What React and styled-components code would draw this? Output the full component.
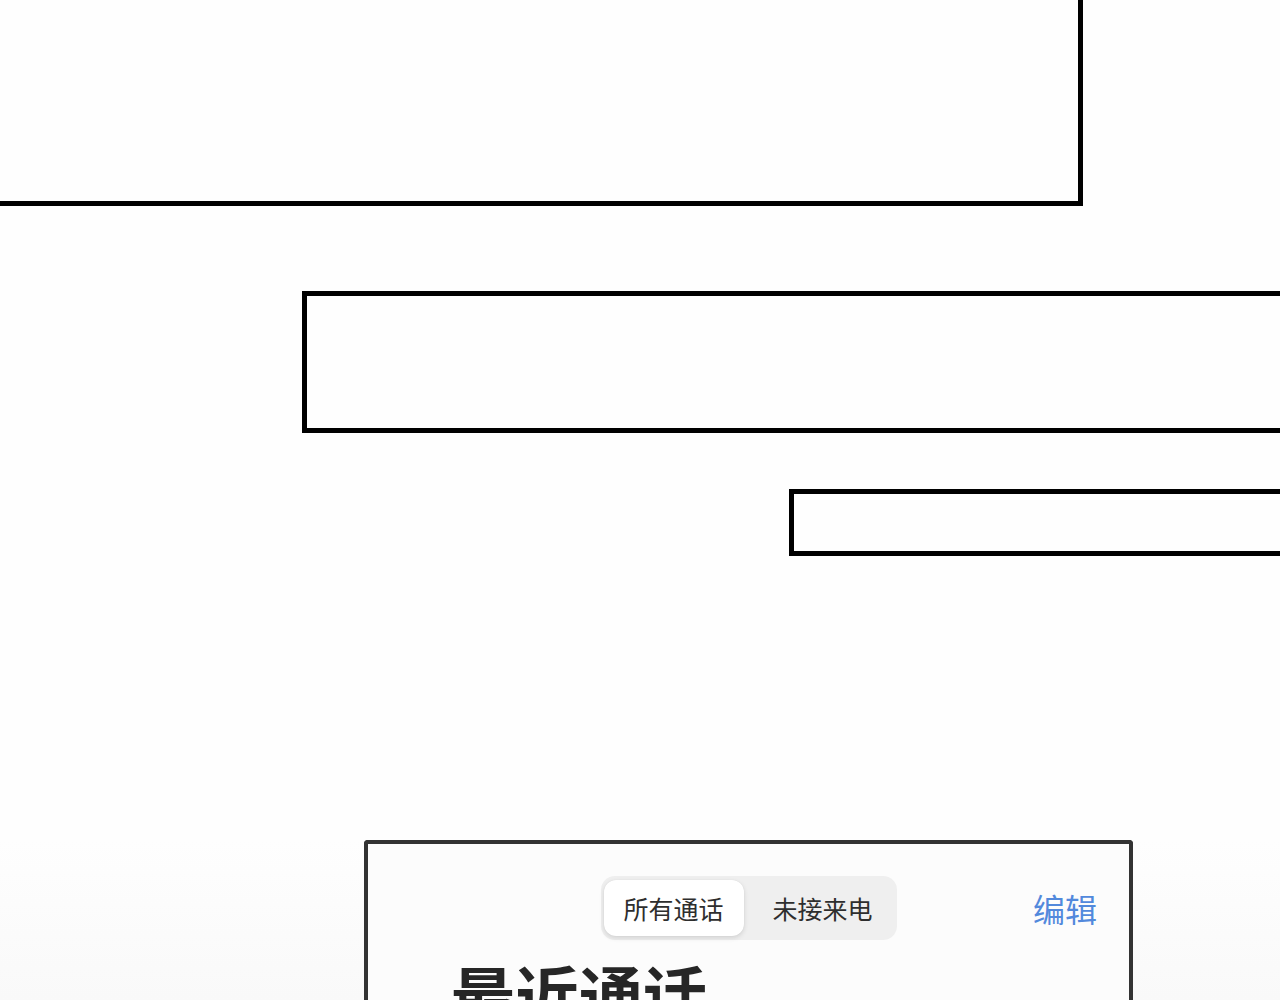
import React from 'react'
import styled, { createGlobalStyle } from 'styled-components'

const GlobalStyle = createGlobalStyle`
  html, body {
    margin: 0;
    padding: 0;
  }
  body {
    width: 1280px;
    height: 1000px;
    overflow: hidden;
    background: #fefefe;
    font-family: "Noto Sans CJK SC", "Noto Sans", sans-serif;
  }
`

const Page = styled.div`
  position: relative;
  width: 1280px;
  height: 1000px;
  overflow: hidden;
  display: flex;
  flex-direction: column;
  background: linear-gradient(to bottom, #fefefe 0%, #fefefe 84%, #f9f9f9 100%);
`

const Frame = styled.div`
  flex: 0 0 auto;
  box-sizing: border-box;
  border: 5px solid #000;
  background: #fefefe;
  margin-top: ${p => p.$top}px;
  margin-left: ${p => p.$left}px;
  width: ${p => p.$width}px;
  height: ${p => p.$height}px;
`

const Phone = styled.div`
  flex: 0 0 auto;
  box-sizing: border-box;
  margin-top: 284px;
  margin-left: 364px;
  width: 769px;
  height: 320px;
  border: 4px solid #333;
  border-bottom: none;
  border-radius: 4px 4px 0 0;
  background: #fcfcfc;
  display: flex;
  flex-direction: column;
`

const Header = styled.div`
  display: grid;
  grid-template-columns: 1fr auto 1fr;
  align-items: center;
  padding: 32px 32px 0 32px;
`

const Segmented = styled.div`
  grid-column: 2;
  display: flex;
  align-items: center;
  box-sizing: border-box;
  width: 296px;
  height: 64px;
  padding: 4px 3px;
  border-radius: 14px;
  background: #efefef;
`

const Segment = styled.div`
  flex: ${p => p.$active ? '0 0 140px' : '1 1 auto'};
  height: 56px;
  box-sizing: border-box;
  display: flex;
  align-items: center;
  justify-content: center;
  padding-left: ${p => p.$active ? 0 : 8}px;
  border-radius: 12px;
  font-size: 25px;
  color: #2e2e2e;
  background: ${p => p.$active ? '#ffffff' : 'transparent'};
  box-shadow: ${p => p.$active ? '0 2px 5px rgba(0,0,0,0.12), 0 0 1px rgba(0,0,0,0.1)' : 'none'};
`

const EditLink = styled.div`
  grid-column: 3;
  justify-self: end;
  font-size: 32px;
  color: #5289dc;
  line-height: 1;
`

const Title = styled.div`
  margin-top: 14px;
  padding-left: 83px;
  font-size: 64px;
  font-weight: 700;
  color: #262626;
  line-height: 1.2;
`

export default function App() {
  return (
    <>
      <GlobalStyle />
      <Page>
        <Frame $top={-20} $left={-20} $width={1103} $height={226} />
        <Frame $top={85} $left={302} $width={1000} $height={142} />
        <Frame $top={56} $left={789} $width={520} $height={67} />
        <Phone>
          <Header>
            <Segmented>
              <Segment $active>所有通话</Segment>
              <Segment>未接来电</Segment>
            </Segmented>
            <EditLink>编辑</EditLink>
          </Header>
          <Title>最近通话</Title>
        </Phone>
      </Page>
    </>
  )
}
